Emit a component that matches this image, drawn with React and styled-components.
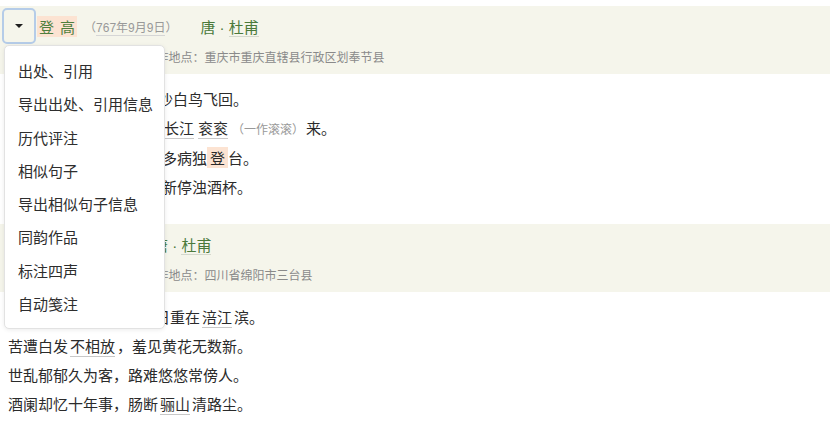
import React, { useState } from "react";
import styled, { createGlobalStyle } from "styled-components";

const GlobalStyle = createGlobalStyle`
  html, body {
    margin: 0;
    padding: 0;
    background: #fff;
  }
  body {
    font-family: "Liberation Sans", "Noto Sans CJK SC", sans-serif;
    color: #2b2b2b;
  }
`;

const Page = styled.div`
  padding-top: 6px;
  width: 830px;
`;

const Card = styled.section`
  margin-bottom: 23px;
`;

const Header = styled.div`
  height: 68px;
  background: #f5f5eb;
  padding-left: 2px;
  box-sizing: border-box;
  display: flex;
  flex-direction: column;
`;

const TitleRow = styled.div`
  display: flex;
  align-items: center;
  height: 36px;
  margin-top: 2px;
`;

const DropWrap = styled.div`
  position: relative;
  margin-right: 1px;
`;

const ToggleButton = styled.button`
  width: 34px;
  height: 36px;
  box-sizing: border-box;
  border: 2px solid ${p => (p.$active ? "#b5cce8" : "transparent")};
  border-radius: 5px;
  background: transparent;
  display: flex;
  align-items: center;
  justify-content: center;
  padding: 0 0 1px;
  cursor: pointer;
  &::after {
    content: "";
    border-left: 4px solid transparent;
    border-right: 4px solid transparent;
    border-top: 4px solid #1e1e1e;
  }
`;

const Menu = styled.ul`
  position: absolute;
  top: 37px;
  left: 2px;
  z-index: 10;
  margin: 0;
  padding: 8px 0;
  list-style: none;
  width: 161px;
  box-sizing: border-box;
  background: #fff;
  border: 1px solid #e2e2e2;
  border-radius: 5px;
  box-shadow: 0 1px 4px rgba(0, 0, 0, 0.08);
  font-family: "Noto Sans CJK SC", sans-serif;
`;

const MenuItem = styled.li`
  height: 33.3px;
  line-height: 33.3px;
  padding-left: 13px;
  font-size: 15px;
  color: #2e2e2e;
  cursor: pointer;
  white-space: nowrap;
  &:hover {
    color: #4b7a3b;
  }
`;

const Title = styled.span`
  font-family: "Noto Sans CJK SC", sans-serif;
  font-size: 15px;
  color: #4f7f3e;
  display: inline-flex;
`;

const TitleChar = styled.span`
  background: #fce3d2;
  padding: ${p => (p.$first ? "0 3px 0 2px" : "0 2px 0 3px")};
`;

const Hl = styled.span`
  background: #fce3d2;
  padding: 0 3px;
`;

const DateText = styled.span`
  font-family: "Liberation Sans", "Noto Sans CJK SC", sans-serif;
  font-size: 12px;
  color: #999;
  margin-left: 7px;
`;

const Under = styled.span`
  border-bottom: 1px solid ${p => p.$color || "#c8c8c8"};
  margin: 0 ${p => (p.$gap === undefined ? 2 : p.$gap)}px;
`;

const Author = styled.span`
  font-family: "Liberation Sans", "Noto Sans CJK SC", sans-serif;
  font-size: 15px;
  color: #4b7a3b;
  margin-left: 23px;
  white-space: pre;
`;

const Sub = styled.div`
  display: flex;
  gap: 7px;
  margin-top: 4px;
  padding-left: 6px;
  font-family: "Liberation Sans", "Noto Sans CJK SC", sans-serif;
  font-size: 12px;
  line-height: 20px;
  color: #8a8a8a;
`;

const Body = styled.div`
  padding: 10px 0 0 8px;
  font-family: "Noto Sans CJK SC", sans-serif;
  font-size: 15px;
  line-height: 29px;
  color: #2b2b2b;
`;

const Line = styled.div`
  white-space: nowrap;
`;

const Note = styled.span`
  font-size: 12px;
  color: #999;
  margin: 0 2px;
`;

const menuItems = [
  "出处、引用",
  "导出出处、引用信息",
  "历代评注",
  "相似句子",
  "导出相似句子信息",
  "同韵作品",
  "标注四声",
  "自动笺注",
];

const poems = [
  {
    title: "登高",
    marked: true,
    date: "767年9月9日",
    time: "创作时间：767年9月9日",
    place: "创作地点：重庆市重庆直辖县行政区划奉节县",
    lines: [
      ["风急天高猿啸哀，渚清沙白鸟飞回。"],
      ["无边落木", { u: "萧萧" }, "下，不尽", { u: "长江" }, { u: "衮衮" }, { n: "（一作滚滚）" }, "来。"],
      ["万里悲秋常", { u: "作客" }, "，百年多病独", { h: "登" }, "台。"],
      ["艰难苦恨", { u: "繁霜鬓" }, "，潦倒新停浊酒杯。"],
    ],
  },
  {
    title: "九日",
    marked: false,
    date: "763年",
    time: "创作时间：763年9月9日",
    place: "创作地点：四川省绵阳市三台县",
    lines: [
      ["去年", { h: "登" }, { h: "高" }, "郪县北，今日重在", { u: "涪江" }, "滨。"],
      ["苦遭白发", { u: "不相放" }, "，羞见黄花无数新。"],
      ["世乱郁郁久为客，路难悠悠常傍人。"],
      ["酒阑却忆十年事，肠断", { u: "骊山" }, "清路尘。"],
    ],
  },
];

function Segment({ s }) {
  if (typeof s === "string") return s;
  if (s.h) return <Hl>{s.h}</Hl>;
  if (s.u) return <Under>{s.u}</Under>;
  if (s.n) return <Note>{s.n}</Note>;
  return null;
}

function Poem({ poem, withMenu }) {
  const [isOpen, setIsOpen] = useState(withMenu);

  return (
    <Card>
      <Header>
        <TitleRow>
          <DropWrap>
            <ToggleButton $active={isOpen} onClick={() => setIsOpen(!isOpen)} />
            {isOpen && (
              <Menu>
                {menuItems.map(item => (
                  <MenuItem key={item} onClick={() => setIsOpen(false)}>
                    {item}
                  </MenuItem>
                ))}
              </Menu>
            )}
          </DropWrap>
          <Title>
            {poem.marked
              ? poem.title.split("").map((c, i) => (
                  <TitleChar key={i} $first={i === 0}>
                    {c}
                  </TitleChar>
                ))
              : poem.title}
          </Title>
          <DateText>
            （<Under $gap={0} $color="#d6d6d6">{poem.date}</Under>）
          </DateText>
          <Author>
            {"唐 · "}
            <Under $gap={0} $color="#d4d8cc">杜甫</Under>
          </Author>
        </TitleRow>
        <Sub>
          <span>{poem.time}</span>
          <span>{poem.place}</span>
        </Sub>
      </Header>
      <Body>
        {poem.lines.map((line, i) => (
          <Line key={i}>
            {line.map((s, j) => (
              <Segment key={j} s={s} />
            ))}
          </Line>
        ))}
      </Body>
    </Card>
  );
}

export default function App() {
  return (
    <>
      <GlobalStyle />
      <Page>
        {poems.map((p, i) => (
          <Poem key={i} poem={p} withMenu={i === 0} />
        ))}
      </Page>
    </>
  );
}
